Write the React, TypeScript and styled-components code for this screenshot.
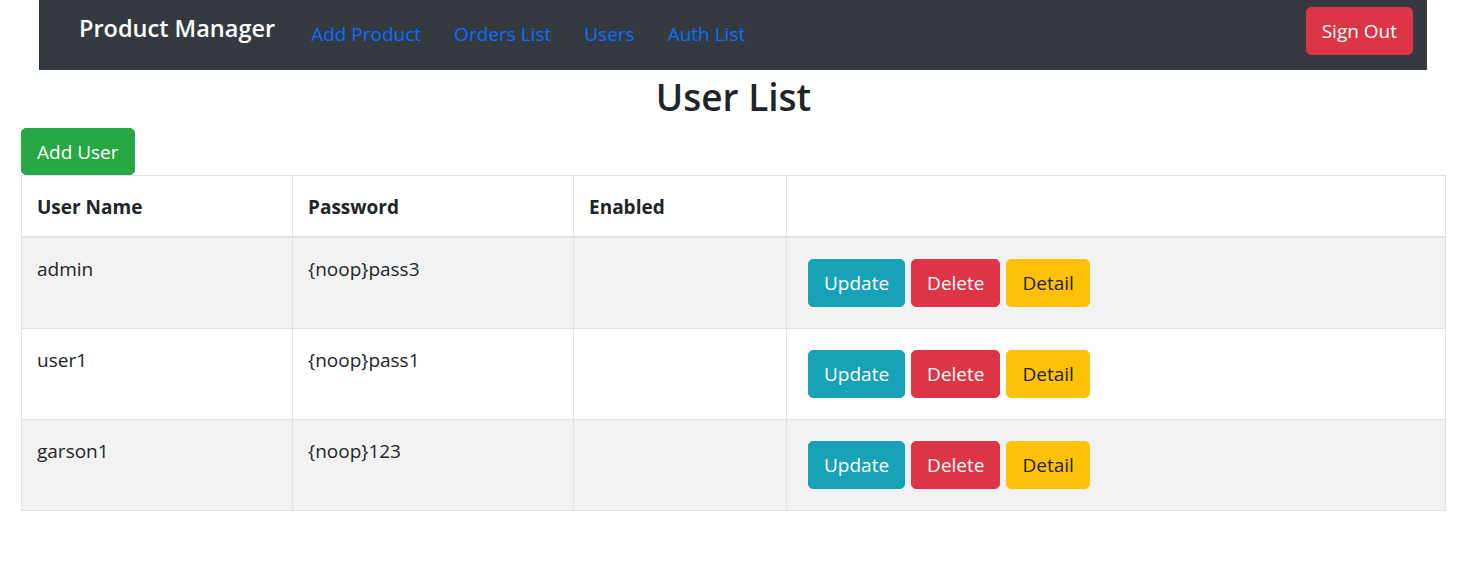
import React from "react";
import styled, { createGlobalStyle } from "styled-components";

const Global = createGlobalStyle`
  html, body { margin: 0; padding: 0; background: #fff; }
  body {
    font-family: "Open Sans", "Noto Sans", sans-serif;
    font-size: 19px;
    line-height: 30px;
    color: #212529;
  }
  * { box-sizing: border-box; }
`;

const Page = styled.div`
  display: flex;
  flex-direction: column;
`;

const NavBar = styled.nav`
  display: flex;
  align-items: flex-start;
  height: 70px;
  margin: 0 34px 0 39px;
  padding: 7px 14px 0 40px;
  background: #343a40;
`;

const Brand = styled.a`
  margin-top: 3px;
  font-size: 23.5px;
  line-height: 36px;
  font-weight: 600;
  color: #fff;
  text-decoration: none;
  white-space: nowrap;
`;

const NavLinks = styled.div`
  display: flex;
  gap: 33px;
  margin-left: 36px;
  margin-top: 12px;
`;

const NavLink = styled.a`
  font-size: 19px;
  line-height: 30px;
  color: #0d6efd;
  text-decoration: none;
  white-space: nowrap;
`;

const Spacer = styled.div`
  flex: 1;
`;

const Button = styled.button<{ $bg: string; $fg?: string }>`
  display: inline-block;
  font-family: inherit;
  font-size: 19px;
  line-height: 30px;
  padding: 8px 15px;
  border: 1px solid ${(p) => p.$bg};
  border-radius: 5px;
  background: ${(p) => p.$bg};
  color: ${(p) => p.$fg ?? "#fff"};
  cursor: pointer;
  white-space: nowrap;
`;

const AddButton = styled(Button)`
  padding: 8px 15px 7px;
`;

const Content = styled.main`
  display: flex;
  flex-direction: column;
  align-items: flex-start;
  padding: 3px 15px 0 21px;
`;

const Title = styled.h2`
  align-self: stretch;
  margin: 0 0 7px;
  text-align: center;
  font-size: 37px;
  line-height: 48px;
  font-weight: 600;
`;

const Table = styled.table`
  width: 1425px;
  border-collapse: collapse;
  border: 1px solid #dee2e6;
`;

const HeadCell = styled.th<{ $w?: number }>`
  width: ${(p) => (p.$w ? `${p.$w}px` : "auto")};
  padding: 16px 15px 14px;
  text-align: left;
  font-weight: 700;
  vertical-align: bottom;
  border: 1px solid #dee2e6;
  border-bottom: 2px solid #dee2e6;
`;

const Row = styled.tr<{ $striped: boolean }>`
  background: ${(p) => (p.$striped ? "#f2f2f2" : "#fff")};
`;

const Cell = styled.td`
  padding: 16px 15px 14px;
  height: 91px;
  vertical-align: top;
  border: 1px solid #dee2e6;
`;

const ActionCell = styled.td`
  padding: 21px 20px 20px 21px;
  vertical-align: top;
  border: 1px solid #dee2e6;
`;

const Actions = styled.div`
  display: flex;
  gap: 6px;
`;

const users = [
  { name: "admin", password: "{noop}pass3" },
  { name: "user1", password: "{noop}pass1" },
  { name: "garson1", password: "{noop}123" },
];

export default function App() {
  return (
    <Page>
      <Global />
      <NavBar>
        <Brand href="#">Product Manager</Brand>
        <NavLinks>
          <NavLink href="#">Add Product</NavLink>
          <NavLink href="#">Orders List</NavLink>
          <NavLink href="#">Users</NavLink>
          <NavLink href="#">Auth List</NavLink>
        </NavLinks>
        <Spacer />
        <Button $bg="#dc3545">Sign Out</Button>
      </NavBar>
      <Content>
        <Title>User List</Title>
        <AddButton $bg="#28a745">Add User</AddButton>
        <Table>
          <thead>
            <tr>
              <HeadCell $w={271}>User Name</HeadCell>
              <HeadCell $w={281}>Password</HeadCell>
              <HeadCell $w={213}>Enabled</HeadCell>
              <HeadCell></HeadCell>
            </tr>
          </thead>
          <tbody>
            {users.map((u, i) => (
              <Row key={u.name} $striped={i % 2 === 0}>
                <Cell>{u.name}</Cell>
                <Cell>{u.password}</Cell>
                <Cell></Cell>
                <ActionCell>
                  <Actions>
                    <Button $bg="#17a2b8">Update</Button>
                    <Button $bg="#dc3545">Delete</Button>
                    <Button $bg="#ffc107" $fg="#212529">Detail</Button>
                  </Actions>
                </ActionCell>
              </Row>
            ))}
          </tbody>
        </Table>
      </Content>
    </Page>
  );
}
